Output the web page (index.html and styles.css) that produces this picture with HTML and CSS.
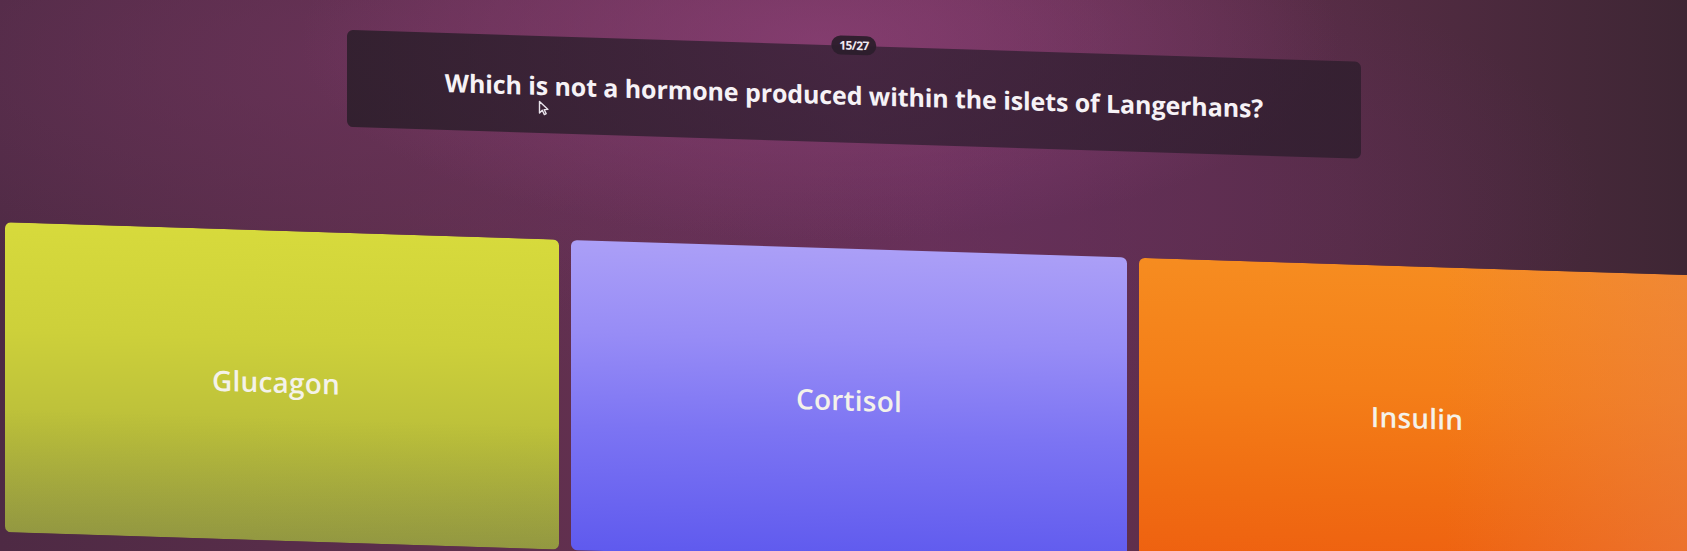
FILE: index.html
```html
<!DOCTYPE html>
<html lang="en">
<head>
<meta charset="utf-8">
<title>Quiz</title>
<link rel="stylesheet" href="styles.css">
</head>
<body>
<div class="screen">
  <div class="scene">
    <section class="question-wrap">
      <div class="question">
        <span class="counter">15/27</span>
        <p class="question-text">Which is not a hormone produced within the islets of Langerhans?</p>
      </div>
    </section>
    <section class="answers">
      <button class="answer yellow"><span>Glucagon</span></button>
      <button class="answer purple"><span>Cortisol</span></button>
      <button class="answer orange"><span>Insulin</span></button>
    </section>
  </div>
  <svg class="cursor" width="12" height="16" viewBox="0 0 12 16"><path d="M1.5 1.5 L1.5 13 L4.3 10.3 L6.4 14.6 L8.2 13.7 L6.2 9.6 L10 9.4 Z" fill="none" stroke="#e8e2ea" stroke-width="1.4" stroke-linejoin="round"/></svg>
</div>
</body>
</html>
```

FILE: styles.css
```css
html, body {
  margin: 0;
  padding: 0;
  width: 1687px;
  height: 551px;
  overflow: hidden;
}

body {
  background: #3f2838;
  font-family: "Open Sans", "Lato", sans-serif;
}

.screen {
  position: relative;
  width: 1687px;
  height: 551px;
  overflow: hidden;
  background:
    radial-gradient(ellipse 520px 200px at 820px 40px, rgba(140, 64, 118, 0.75), rgba(140, 64, 118, 0) 100%),
    radial-gradient(ellipse 700px 260px at 420px 60px, rgba(110, 52, 92, 0.7), rgba(110, 52, 92, 0) 100%),
    radial-gradient(ellipse 600px 260px at 1000px 200px, rgba(100, 46, 96, 0.55), rgba(100, 46, 96, 0) 100%),
    linear-gradient(90deg, #4e2a44 0%, #62304f 35%, #6a3254 55%, #552c44 80%, #3e2634 100%);
}

.scene {
  transform: skewY(1.8deg);
  transform-origin: 0 0;
  padding-top: 19px;
}

.question-wrap {
  padding-left: 347px;
}

.question {
  position: relative;
  width: 1014px;
  height: 97px;
  box-sizing: border-box;
  border-radius: 6px;
  background: linear-gradient(90deg, rgba(38, 28, 38, 0.8), rgba(46, 30, 48, 0.72) 50%, rgba(42, 28, 42, 0.75));
  display: flex;
  align-items: center;
  justify-content: center;
}

.counter {
  position: absolute;
  left: 50%;
  top: -10px;
  transform: translateX(-50%);
  padding: 1px 8px;
  border-radius: 10px;
  background: rgba(44, 30, 44, 0.95);
  color: #f0e8f0;
  font-size: 12px;
  font-weight: 700;
  letter-spacing: -0.6px;
  line-height: 17px;
}

.question-text {
  margin: 0;
  color: #f6f2f6;
  font-size: 25px;
  font-weight: 700;
  letter-spacing: -0.1px;
  white-space: nowrap;
}

.answers {
  margin-top: 106px;
  padding-left: 5px;
  display: grid;
  grid-template-columns: 554px 556px 556px;
  gap: 12px;
}

.answer {
  height: 310px;
  border: none;
  border-radius: 6px;
  display: flex;
  align-items: center;
  justify-content: center;
  font-family: "Open Sans", "Lato", sans-serif;
  font-size: 28px;
  font-weight: 600;
  color: #f4f2ea;
  letter-spacing: 0.2px;
  padding: 0;
}

.answer span {
  display: block;
  margin-top: -8px;
}

.yellow span {
  margin-right: 12px;
}

.yellow {
  background:
    linear-gradient(180deg, rgba(0,0,0,0) 60%, rgba(60, 70, 60, 0.18) 100%),
    linear-gradient(180deg, #d7da3c 0%, #cdd03a 35%, #bbbf3a 65%, #a6aa42 100%);
}

.purple {
  background: linear-gradient(180deg, #ab9ff7 0%, #978cf6 30%, #7c74f3 60%, #5f5aee 100%);
}

.orange {
  background:
    linear-gradient(90deg, rgba(240, 140, 80, 0) 55%, rgba(232, 130, 80, 0.45) 100%),
    linear-gradient(180deg, #f68c20 0%, #f47e18 40%, #f06c12 75%, #ee5f10 100%);
}

.cursor {
  position: absolute;
  left: 538px;
  top: 100px;
}
```
